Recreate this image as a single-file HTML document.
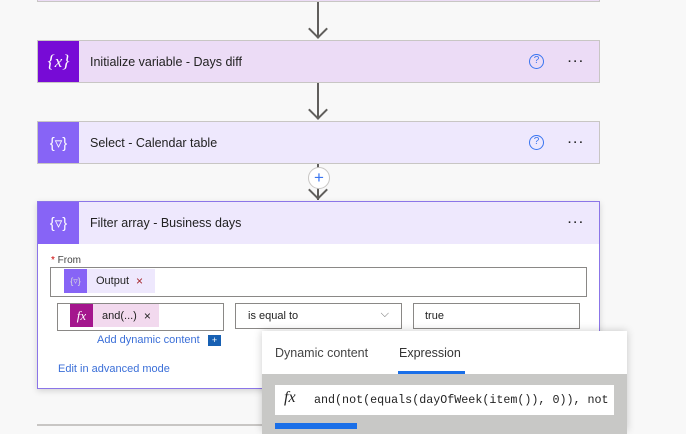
<!DOCTYPE html>
<html><head><style>
*{box-sizing:border-box;margin:0;padding:0}
body{width:686px;height:427px;background:#f8f8f8;position:relative;overflow:hidden;font-family:"Segoe UI","Liberation Sans",sans-serif;font-size:12.5px;color:#222}
.a{position:absolute}
.card{position:absolute;left:37px;width:563px;height:43px;border:1px solid #c8c6c4;display:flex;align-items:center}
.ic{width:41px;height:41px;display:flex;align-items:center;justify-content:center;color:#fff;font-size:18px}
.title{margin-left:11px;flex:1}
.q{width:15px;height:15px;border:1.3px solid #3a75f0;border-radius:50%;color:#3a75f0;font-size:10px;text-align:center;line-height:12px;margin-right:24px}
.dots{letter-spacing:2px;font-weight:bold;margin-right:14px;font-size:11px;line-height:8px}
.line{position:absolute;left:317px;width:2px;background:#605e5c}
.arr{position:absolute;left:311px;width:14px;height:14px;border-right:2px solid #605e5c;border-bottom:2px solid #605e5c;transform:rotate(45deg)}
.box{position:absolute;border:1px solid #8a8886;background:#fff}
</style></head><body>
<div class="a" style="left:37px;top:-10px;width:563px;height:12px;border:1px solid #c8c6c4;background:#ecdcf6"></div>
<div class="line" style="top:2px;height:36px"></div><div class="arr" style="top:22px"></div>
<div class="card" style="top:40px;background:#ecdcf6"><div class="ic" style="background:#770bd6"><i style="font-family:'Liberation Serif',serif">{<span style="font-size:17px">x</span>}</i></div><div class="title">Initialize variable - Days diff</div><div class="q">?</div><div class="dots">···</div></div>
<div class="line" style="top:83px;height:36px"></div><div class="arr" style="top:103px"></div>
<div class="card" style="top:121px;background:#eee8fd"><div class="ic" style="background:#8764f6;font-size:15px">{▿}</div><div class="title">Select - Calendar table</div><div class="q">?</div><div class="dots">···</div></div>
<div class="line" style="top:164px;height:36px"></div><div class="arr" style="top:183px"></div>
<div class="a" style="left:308px;top:167px;width:22px;height:22px;border:1px solid #c8c6c4;border-radius:50%;background:#fff;color:#3a75f0;text-align:center;line-height:19px;font-size:17px">+</div>
<div class="a" style="left:37px;top:201px;width:563px;height:188px;border:1px solid #8b75e8;background:#fff;box-shadow:0 2px 6px rgba(0,0,0,.15)">
<div style="display:flex;align-items:center;height:42px;background:#eee8fd"><div class="ic" style="background:#8764f6;font-size:15px;height:42px">{▿}</div><div class="title">Filter array - Business days</div><div class="dots">···</div></div>
</div>
<div class="a" style="left:51px;top:255px;font-size:10px;color:#444"><span style="color:#c00">*</span> From</div>
<div class="box" style="left:50px;top:267px;width:537px;height:30px"></div>
<div class="a" style="left:64px;top:269px;width:91px;height:24px;background:#eee8fd;display:flex;align-items:center;font-size:11px"><div style="width:23px;height:24px;background:#8764f6;color:#ddd;font-size:9px;text-align:center;line-height:24px">{▿}</div><span style="margin-left:9px">Output</span><span style="margin-left:7px;font-size:12px;color:#a4262c">×</span></div>
<div class="box" style="left:57px;top:303px;width:167px;height:28px"></div>
<div class="a" style="left:70px;top:304px;width:89px;height:23px;background:#f2d9ee;display:flex;align-items:center;font-size:11px"><div style="width:23px;height:23px;background:#a4168d;color:#fff;font-family:'Liberation Serif',serif;font-style:italic;text-align:center;line-height:23px;font-size:13px">fx</div><span style="margin-left:9px">and(...)</span><span style="margin-left:7px;font-size:12px">×</span></div>
<div class="box" style="left:235px;top:303px;width:167px;height:26px;font-size:11px;padding:6px 12px">is equal to<span style="position:absolute;right:12px;top:4px;color:#666">⌵</span></div>
<div class="box" style="left:413px;top:303px;width:167px;height:26px;font-size:11px;padding:6px 11px">true</div>
<div class="a" style="left:97px;top:334px;font-size:11px;color:#3b6fd8">Add dynamic content</div>
<div class="a" style="left:208px;top:335px;width:13px;height:11px;background:#1760b3;color:#fff;font-size:9px;text-align:center;line-height:11px">+</div>
<div class="a" style="left:58px;top:363px;font-size:11px;color:#3b6fd8">Edit in advanced mode</div>
<div class="a" style="left:37px;top:424px;width:230px;height:2px;background:#c8c6c4"></div>
<div class="a" style="left:262px;top:331px;width:365px;height:100px;background:#fff;box-shadow:0 0 8px rgba(0,0,0,.2)">
<div class="a" style="left:13px;top:15px;font-size:12.5px;color:#444">Dynamic content</div>
<div class="a" style="left:137px;top:15px;font-size:12.5px;color:#333">Expression</div>
<div class="a" style="left:136px;top:40px;width:67px;height:3px;background:#1a6fe8"></div>
<div class="a" style="left:0;top:43px;width:365px;height:60px;background:#c8c8c6"></div>
<div class="a" style="left:13px;top:54px;width:339px;height:30px;background:#fff;white-space:nowrap;overflow:hidden"><span style="position:absolute;left:9px;top:4px;font-family:'Liberation Serif',serif;font-style:italic;font-size:16px">fx</span><span style="position:absolute;left:39px;top:8px;font-family:'Liberation Mono',monospace;font-size:11.7px">and(not(equals(dayOfWeek(item()), 0)), not</span></div>
<div class="a" style="left:13px;top:92px;width:82px;height:6px;background:#1a6fe8"></div>
</div>
</body></html>
